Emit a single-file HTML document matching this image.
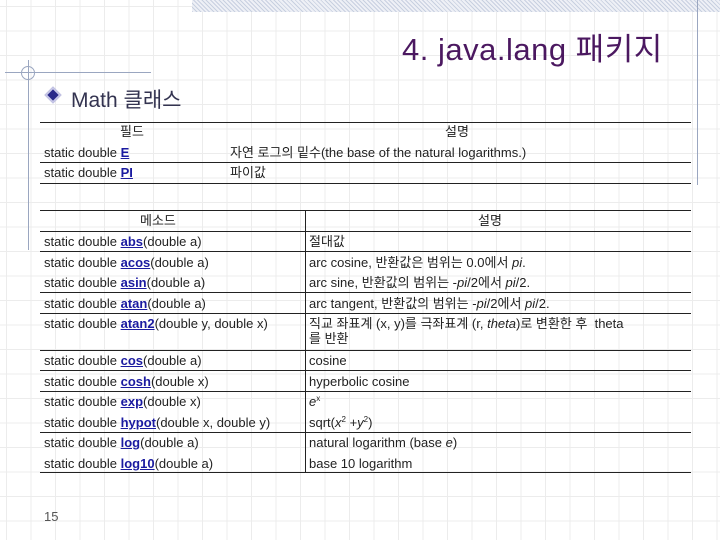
<!DOCTYPE html>
<html><head><meta charset="utf-8"><style>
body{margin:0;width:720px;height:540px;position:relative;overflow:hidden;background:#fff;
background-image:linear-gradient(to right,#ececec 1px,transparent 1px),linear-gradient(to bottom,#ececec 1px,transparent 1px);
background-size:24.5px 24.5px;background-position:6px 6px;font-family:"Liberation Sans","Noto Sans CJK KR",sans-serif}
.a{position:absolute}
.t{position:absolute;font-size:13px;line-height:15px;color:#222;white-space:nowrap}
.t sup{font-size:8px;line-height:0;vertical-align:5px}
.b{color:#1a1aa0;font-weight:bold;text-decoration:underline}
.l{position:absolute;left:40px;width:651px;height:1px;background:#222}
.c{position:absolute;left:305px;width:1px;background:#222}
</style></head><body>
<div class="a" style="left:192px;top:0;width:528px;height:12px;background:repeating-linear-gradient(45deg,#c8d0e0 0 1px,#eef0f6 1px 3px)"></div>
<div class="a" style="left:697px;top:0;width:1px;height:185px;background:#9aa6c0"></div>
<div class="a" style="left:5px;top:72px;width:146px;height:1px;background:#9aa6c0"></div>
<div class="a" style="left:28px;top:60px;width:1px;height:190px;background:#9aa6c0"></div>
<div class="a" style="left:21px;top:66px;width:12px;height:12px;border:1px solid #9aa6c0;border-radius:50%"></div>
<div class="a" style="left:402px;top:24px;font-size:31px;letter-spacing:0.5px;color:#4b1860;white-space:nowrap">4. java.lang 패키지</div>
<div class="a" style="left:47px;top:89px;width:12px;height:12px;transform:rotate(45deg);background:#2a2a8a;border:2px solid #c8c8e8;box-sizing:border-box"></div>
<div class="a" style="left:71px;top:84px;font-size:21px;color:#333350">Math 클래스</div>

<div class="l" style="top:122px"></div><div class="l" style="top:162px"></div><div class="l" style="top:183px"></div>
<div class="t" style="left:120px;top:124px">필드</div><div class="t" style="left:445px;top:124px">설명</div>
<div class="t" style="left:44px;top:145px">static double <span class="b">E</span></div>
<div class="t" style="left:230px;top:145px">자연 로그의 밑수(the base of the natural logarithms.)</div>
<div class="t" style="left:44px;top:165px">static double <span class="b">PI</span></div>
<div class="t" style="left:230px;top:165px">파이값</div>

<div class="l" style="top:210px"></div><div class="l" style="top:231px"></div><div class="l" style="top:251px"></div>
<div class="l" style="top:292px"></div><div class="l" style="top:313px"></div><div class="l" style="top:350px"></div>
<div class="l" style="top:370px"></div><div class="l" style="top:391px"></div><div class="l" style="top:432px"></div>
<div class="l" style="top:472px"></div>
<div class="c" style="top:210px;height:262px"></div>
<div class="t" style="left:140px;top:213px">메소드</div><div class="t" style="left:478px;top:213px">설명</div>
<div class="t" style="left:44px;top:234px">static double <span class="b">abs</span>(double a)</div><div class="t" style="left:309px;top:234px">절대값</div>
<div class="t" style="left:44px;top:255px">static double <span class="b">acos</span>(double a)</div><div class="t" style="left:309px;top:255px">arc cosine, 반환값은 범위는 0.0에서 <i>pi</i>.</div>
<div class="t" style="left:44px;top:275px">static double <span class="b">asin</span>(double a)</div><div class="t" style="left:309px;top:275px">arc sine, 반환값의 범위는 -<i>pi</i>/2에서 <i>pi</i>/2.</div>
<div class="t" style="left:44px;top:296px">static double <span class="b">atan</span>(double a)</div><div class="t" style="left:309px;top:296px">arc tangent, 반환값의 범위는 -<i>pi</i>/2에서 <i>pi</i>/2.</div>
<div class="t" style="left:44px;top:316px">static double <span class="b">atan2</span>(double y, double x)</div><div class="t" style="left:309px;top:316px">직교 좌표계 (x, y)를 극좌표계 (r, <i>theta</i>)로 변환한 후 &nbsp;theta</div>
<div class="t" style="left:309px;top:331px">를 반환</div>
<div class="t" style="left:44px;top:353px">static double <span class="b">cos</span>(double a)</div><div class="t" style="left:309px;top:353px">cosine</div>
<div class="t" style="left:44px;top:374px">static double <span class="b">cosh</span>(double x)</div><div class="t" style="left:309px;top:374px">hyperbolic cosine</div>
<div class="t" style="left:44px;top:394px">static double <span class="b">exp</span>(double x)</div><div class="t" style="left:309px;top:394px"><i>e</i><sup>x</sup></div>
<div class="t" style="left:44px;top:415px">static double <span class="b">hypot</span>(double x, double y)</div><div class="t" style="left:309px;top:415px">sqrt(<i>x</i><sup>2</sup> +<i>y</i><sup>2</sup>)</div>
<div class="t" style="left:44px;top:435px">static double <span class="b">log</span>(double a)</div><div class="t" style="left:309px;top:435px">natural logarithm (base <i>e</i>)</div>
<div class="t" style="left:44px;top:456px">static double <span class="b">log10</span>(double a)</div><div class="t" style="left:309px;top:456px">base 10 logarithm</div>
<div class="t" style="left:44px;top:509px;color:#555">15</div>
</body></html>
